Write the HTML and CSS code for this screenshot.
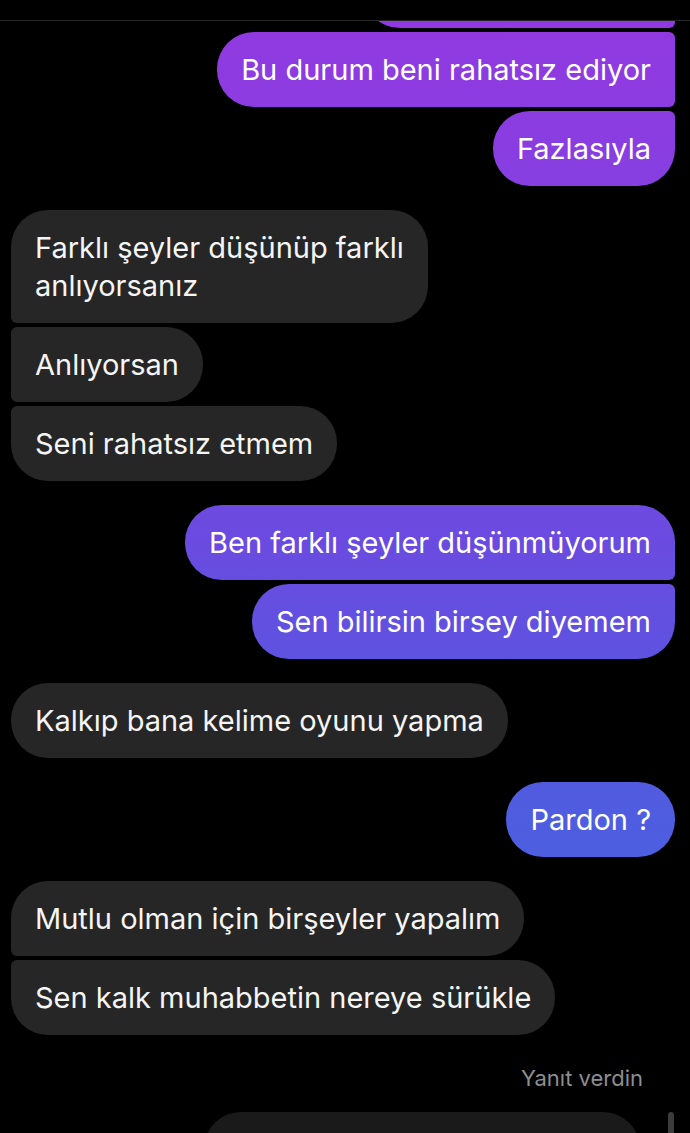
FILE: index.html
```html
<!DOCTYPE html>
<html lang="tr">
<head>
    <meta charset="UTF-8">
    <meta name="viewport" content="width=device-width, initial-scale=1.0">
    <title>Mesajlar</title>
    <link rel="stylesheet" href="styles.css">
</head>
<body>
    <!-- Header is mostly scrolled off, only its bottom border shows -->
    <header class="top-bar"></header>

    <main class="chat">
        <div class="group me">
            <div class="bubble clipped">&nbsp;</div>
            <div class="bubble">Bu durum beni rahatsız ediyor</div>
            <div class="bubble">Fazlasıyla</div>
        </div>

        <div class="group them">
            <div class="bubble">Farklı şeyler düşünüp farklı<br>anlıyorsanız</div>
            <div class="bubble">Anlıyorsan</div>
            <div class="bubble">Seni rahatsız etmem</div>
        </div>

        <div class="group me">
            <div class="bubble">Ben farklı şeyler düşünmüyorum</div>
            <div class="bubble">Sen bilirsin birsey diyemem</div>
        </div>

        <div class="group them">
            <div class="bubble">Kalkıp bana kelime oyunu yapma</div>
        </div>

        <div class="group me">
            <div class="bubble">Pardon ?</div>
        </div>

        <div class="group them">
            <div class="bubble">Mutlu olman için birşeyler yapalım</div>
            <div class="bubble">Sen kalk muhabbetin nereye sürükle</div>
        </div>

        <div class="reply">
            <div class="reply-label">Yanıt verdin</div>
            <div class="reply-quote"></div>
        </div>
    </main>

    <div class="scroll-thumb"></div>
</body>
</html>
```

FILE: styles.css
```css
html, body { height: 100%; }
body { margin: 0; background: #000; color: #fff; font-family: "Inter", "Liberation Sans", sans-serif; overflow: hidden; position: relative; }

.top-bar { position: absolute; top: 0; left: 0; right: 0; height: 20px; background: #000; border-bottom: 1px solid #262626; z-index: 2; }

.chat { display: flex; flex-direction: column; gap: 24px; padding: 0 15px 0 11px; margin-top: -47px; }

.group { display: flex; flex-direction: column; gap: 4px; }
.group.me { align-items: flex-end; }
.group.them { align-items: flex-start; }

.bubble { font-size: 29px; line-height: 38px; padding: 19px 24px 18px; border-radius: 37px; white-space: nowrap; }
.bubble.clipped { width: 264px; }
.them .bubble { background: #262626; color: #f5f5f5; }
/* gradient follows the screen, like the app does */
.me .bubble { background: linear-gradient(180deg, #9238e2 0%, #8a3de1 12%, #6a4be0 48%, #4f5de0 72%, #3f66df 100%) fixed; }

.me .bubble:not(:first-child) { border-top-right-radius: 6px; }
.me .bubble:not(:last-child) { border-bottom-right-radius: 6px; }
.them .bubble:not(:first-child) { border-top-left-radius: 6px; }
.them .bubble:not(:last-child) { border-bottom-left-radius: 6px; }

.reply { display: flex; flex-direction: column; align-items: flex-end; padding-top: 7px; }
.reply-label { font-size: 22px; line-height: 24px; color: #8e8e8e; margin-right: 32px; }
.reply-quote { width: 436px; height: 80px; margin-top: 22px; margin-right: 35px; background: #1a1a1a; border-radius: 37px; }

.scroll-thumb { position: absolute; left: 668px; top: 1112px; width: 6px; height: 60px; border-radius: 3px; background: #3c3c3c; }
```
